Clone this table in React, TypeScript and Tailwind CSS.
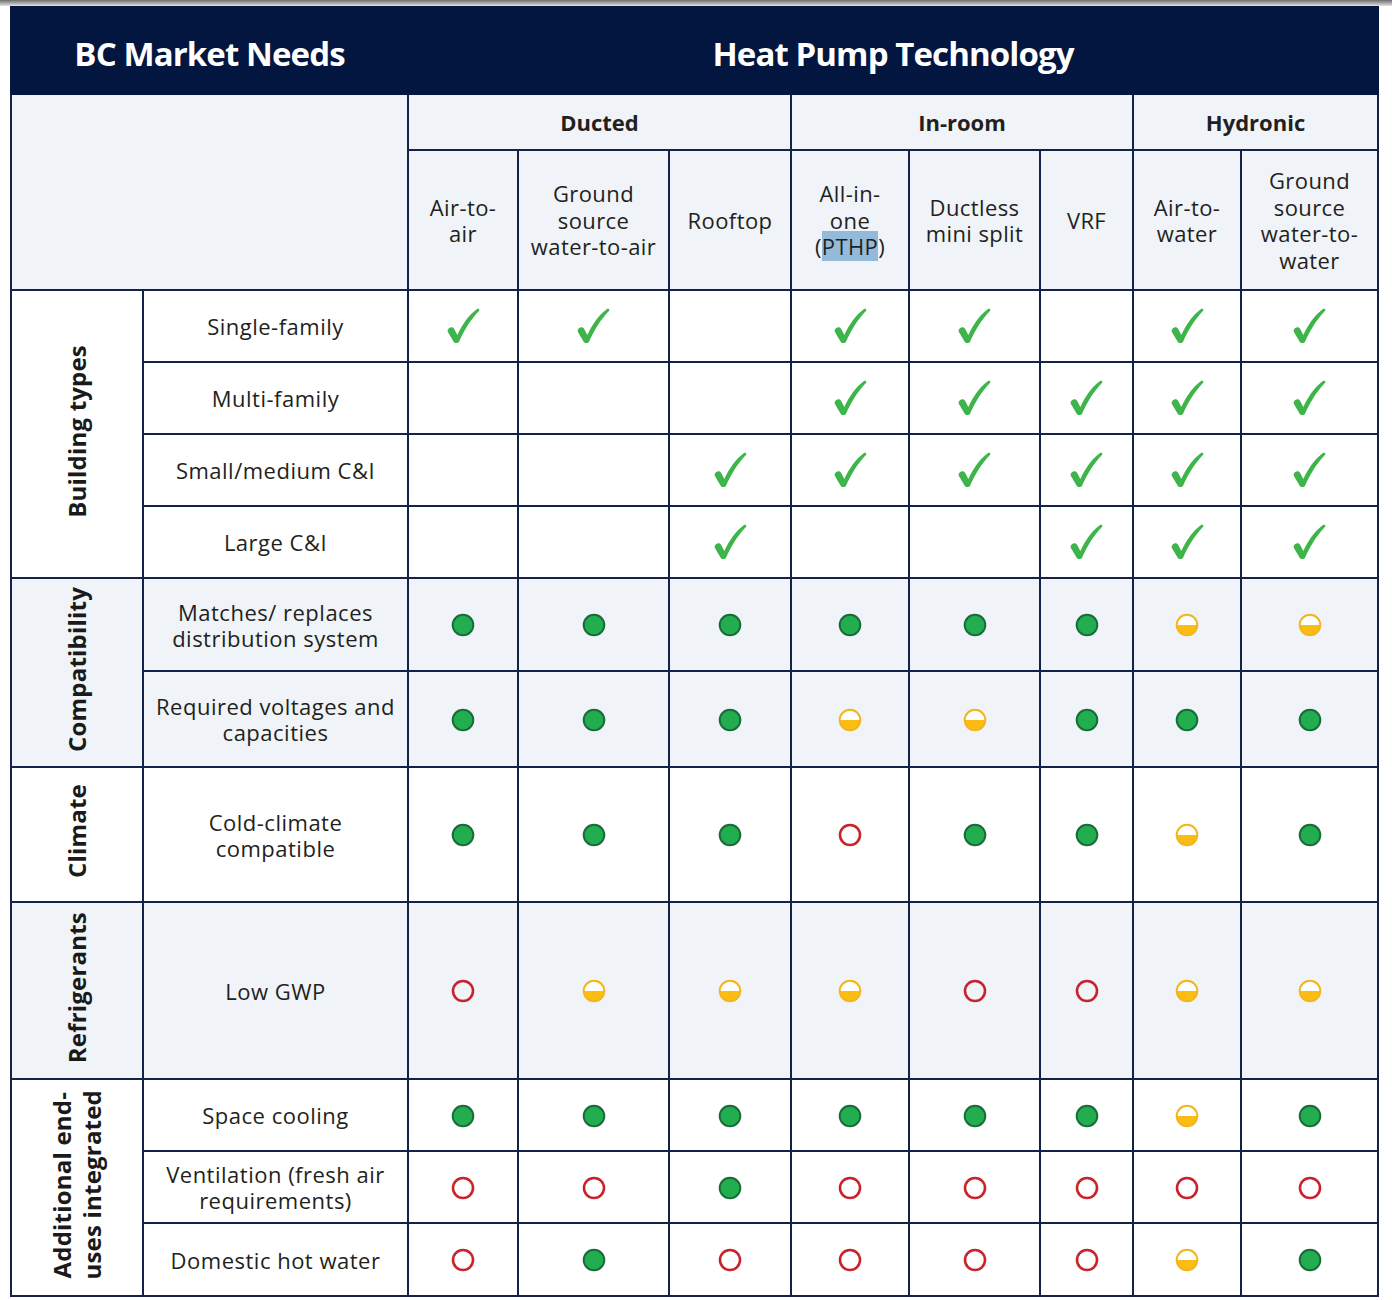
import React from "react";

type Mark = "c" | "g" | "y" | "r" | "";

const Check = () => (
  <svg width="33" height="36" viewBox="0 0 32 35" className="inline-block align-middle">
    <path
      d="M0.8 21 C2 18.3 5.2 17.8 6.7 20 L10 26.3 C14.5 16 21 7 28.8 1.1 C30.5 0 32.2 1.5 31 2.8 C23 11.2 16.2 22 11.8 32.5 C10.7 34.6 7.4 34.6 6.3 32.5 L1.1 23.8 C0.5 22.8 0.5 21.8 0.8 21 Z"
      fill="#3db54a"
    />
  </svg>
);

const Dot = ({ kind }: { kind: "g" | "y" | "r" }) => {
  if (kind === "g")
    return (
      <svg width="24" height="24" viewBox="0 0 24 24" className="inline-block align-middle">
        <circle cx="12" cy="12" r="10.3" fill="#22ad4f" stroke="#1a6a3a" strokeWidth="2" />
      </svg>
    );
  if (kind === "r")
    return (
      <svg width="24" height="24" viewBox="0 0 24 24" className="inline-block align-middle">
        <circle cx="12" cy="12" r="10" fill="none" stroke="#c8222b" strokeWidth="2.6" />
      </svg>
    );
  return (
    <svg width="24" height="24" viewBox="0 0 24 24" className="inline-block align-middle">
      <circle cx="12" cy="12" r="10.3" fill="#ffffff" />
      <path d="M1.7 12 A10.3 10.3 0 0 0 22.3 12 Z" fill="#fbbd14" />
      <circle cx="12" cy="12" r="10.3" fill="none" stroke="#f3b51c" strokeWidth="2" />
    </svg>
  );
};

const MarkCell = ({ m }: { m: Mark }) => (
  <td className="border-2 border-[#14224a] text-center align-middle">
    {m === "c" ? <Check /> : m === "" ? null : <Dot kind={m} />}
  </td>
);

type Row = { label: React.ReactNode; marks: Mark[]; h: string };

const groups: {
  cat: React.ReactNode;
  bg: string;
  rows: Row[];
}[] = [
  {
    cat: "Building types",
    bg: "bg-white",
    rows: [
      { label: "Single-family", marks: ["c", "c", "", "c", "c", "", "c", "c"], h: "h-[72px]" },
      { label: "Multi-family", marks: ["", "", "", "c", "c", "c", "c", "c"], h: "h-[72px]" },
      { label: "Small/medium C&I", marks: ["", "", "c", "c", "c", "c", "c", "c"], h: "h-[72px]" },
      { label: "Large C&I", marks: ["", "", "c", "", "", "c", "c", "c"], h: "h-[72px]" },
    ],
  },
  {
    cat: "Compatibility",
    bg: "bg-[#f0f4f8]",
    rows: [
      {
        label: (
          <>
            Matches/ replaces
            <br />
            distribution system
          </>
        ),
        marks: ["g", "g", "g", "g", "g", "g", "y", "y"],
        h: "h-[93px]",
      },
      {
        label: (
          <>
            Required voltages and
            <br />
            capacities
          </>
        ),
        marks: ["g", "g", "g", "y", "y", "g", "g", "g"],
        h: "h-[96px]",
      },
    ],
  },
  {
    cat: "Climate",
    bg: "bg-white",
    rows: [
      {
        label: (
          <>
            Cold-climate
            <br />
            compatible
          </>
        ),
        marks: ["g", "g", "g", "r", "g", "g", "y", "g"],
        h: "h-[135px]",
      },
    ],
  },
  {
    cat: "Refrigerants",
    bg: "bg-[#f0f4f8]",
    rows: [{ label: "Low GWP", marks: ["r", "y", "y", "y", "r", "r", "y", "y"], h: "h-[177px]" }],
  },
  {
    cat: (
      <>
        Additional end-
        <br />
        uses integrated
      </>
    ),
    bg: "bg-white",
    rows: [
      { label: "Space cooling", marks: ["g", "g", "g", "g", "g", "g", "y", "g"], h: "h-[72px]" },
      {
        label: (
          <>
            Ventilation (fresh air
            <br />
            requirements)
          </>
        ),
        marks: ["r", "r", "g", "r", "r", "r", "r", "r"],
        h: "h-[72px]",
      },
      { label: "Domestic hot water", marks: ["r", "g", "r", "r", "r", "r", "y", "g"], h: "h-[73px]" },
    ],
  },
];

const colHeads: React.ReactNode[] = [
  <>Air-to-<br />air</>,
  <>Ground<br />source<br />water-to-air</>,
  <>Rooftop</>,
  <>All-in-<br />one<br />(<span className="bg-[#93bbd9]">PTHP</span>)</>,
  <>Ductless<br />mini split</>,
  <>VRF</>,
  <>Air-to-<br />water</>,
  <>Ground<br />source<br />water-to-<br />water</>,
];

export default function App() {
  const widths = [132, 265, 110, 151, 122, 118, 131, 93, 108, 137];
  return (
    <div
      className="w-[1392px] min-h-[1300px] bg-white text-[#231f20]"
      style={{ fontFamily: '"Open Sans", "Noto Sans", sans-serif' }}
    >
      <div className="h-[6px] bg-gradient-to-b from-[#6f6f6f] via-[#a8a8a8] to-[#e4e4e4]" />
      <div className="pl-[10px]">
        <table className="table-fixed border-collapse w-[1367px]">
          <colgroup>
            {widths.map((w, i) => (
              <col key={i} style={{ width: w }} />
            ))}
          </colgroup>
          <tbody>
            <tr className="h-[87px] bg-[#021640] text-white">
              <td colSpan={2} className="border-2 border-[#021640] text-center align-middle pt-[6px] text-[33px] font-bold tracking-[-0.9px]">
                BC Market Needs
              </td>
              <td colSpan={8} className="border-2 border-[#021640] text-center align-middle pt-[6px] text-[33px] font-bold tracking-[-0.9px]">
                Heat Pump Technology
              </td>
            </tr>
            <tr className="h-[56px] bg-[#f0f4f8]">
              <td colSpan={2} rowSpan={2} className="border-2 border-[#14224a]" />
              <td colSpan={3} className="border-2 border-[#14224a] text-center align-middle text-[22px] font-bold">
                Ducted
              </td>
              <td colSpan={3} className="border-2 border-[#14224a] text-center align-middle text-[22px] font-bold">
                In-room
              </td>
              <td colSpan={2} className="border-2 border-[#14224a] text-center align-middle text-[22px] font-bold">
                Hydronic
              </td>
            </tr>
            <tr className="h-[140px] bg-[#f0f4f8]">
              {colHeads.map((c, i) => (
                <td key={i} className="border-2 border-[#14224a] text-center align-middle text-[22px] leading-[26.5px] tracking-[0.4px]">
                  {c}
                </td>
              ))}
            </tr>
            {groups.map((g, gi) =>
              g.rows.map((r, ri) => (
                <tr key={`${gi}-${ri}`} className={`${r.h} ${g.bg}`}>
                  {ri === 0 && (
                    <td rowSpan={g.rows.length} className="border-2 border-[#14224a] text-center align-middle">
                      <div className="inline-block [writing-mode:vertical-rl] rotate-180 text-[24px] font-bold leading-[30px] text-[#1a1a1a] tracking-[0.2px]">
                        {g.cat}
                      </div>
                    </td>
                  )}
                  <td className="border-2 border-[#14224a] text-center align-middle text-[22px] leading-[26px] tracking-[0.5px]">
                    {r.label}
                  </td>
                  {r.marks.map((m, mi) => (
                    <MarkCell key={mi} m={m} />
                  ))}
                </tr>
              ))
            )}
          </tbody>
        </table>
      </div>
    </div>
  );
}
